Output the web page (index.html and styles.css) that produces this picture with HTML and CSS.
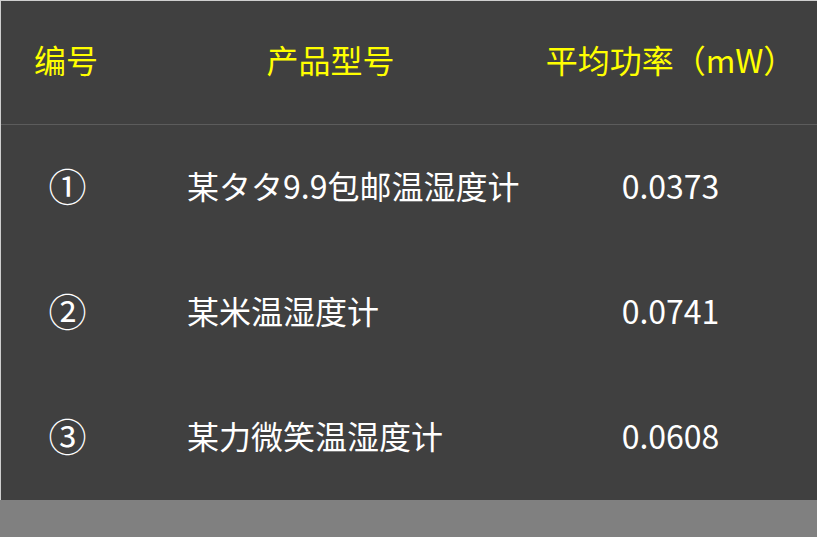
FILE: index.html
```html
<!DOCTYPE html>
<html lang="zh">
<head>
<meta charset="utf-8">
<link rel="stylesheet" href="styles.css">
</head>
<body>
<div class="panel">
  <div class="row head">
    <div class="c1">编号</div>
    <div class="c2">产品型号</div>
    <div class="c3">平均功率（mW）</div>
  </div>
  <div class="row">
    <div class="c1 num">①</div>
    <div class="c2 left">某タタ9.9包邮温湿度计</div>
    <div class="c3">0.0373</div>
  </div>
  <div class="row">
    <div class="c1 num">②</div>
    <div class="c2 left">某米温湿度计</div>
    <div class="c3">0.0741</div>
  </div>
  <div class="row">
    <div class="c1 num">③</div>
    <div class="c2 left">某力微笑温湿度计</div>
    <div class="c3">0.0608</div>
  </div>
</div>
</body>
</html>
```
FILE: styles.css
```css
html, body {
  margin: 0;
  padding: 0;
  background: #808080;
}
body {
  width: 817px;
  height: 537px;
  overflow: hidden;
  font-family: "Noto Sans CJK SC", "Noto Sans", sans-serif;
  font-size: 32px;
  color: #ffffff;
}
.panel {
  background: #404040;
  border-top: 1px solid #cfcfcf;
  border-left: 1px solid #cfcfcf;
  display: flex;
  flex-direction: column;
}
.row {
  display: grid;
  grid-template-columns: 130px 393px 1fr;
  align-items: center;
  height: 125px;
  box-sizing: border-box;
  padding-bottom: 6px;
}
.row.head {
  height: 124px;
  padding-bottom: 8px;
  border-bottom: 1px solid #5c5c5c;
  color: #ffff00;
}
.c1, .c2, .c3 {
  text-align: center;
  white-space: nowrap;
}
.head .c2 {
  padding-left: 6px;
}
.c2.left {
  text-align: left;
  padding-left: 56px;
}
.c1.num {
  font-size: 38px;
  line-height: 1;
  padding-left: 3px;
}
```
